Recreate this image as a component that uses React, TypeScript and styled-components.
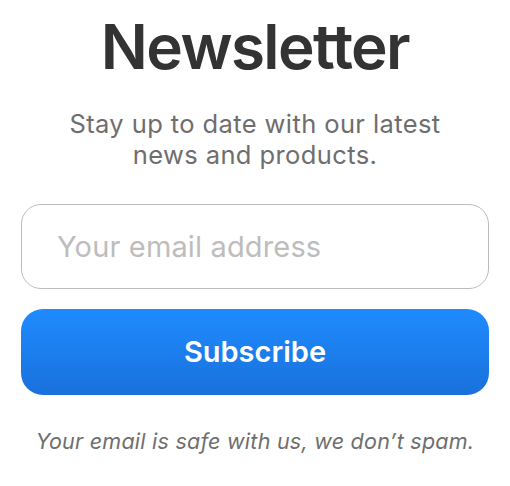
import React from 'react'
import styled, { createGlobalStyle } from 'styled-components'

const GlobalStyle = createGlobalStyle`
  html, body {
    margin: 0;
    padding: 0;
    background: #ffffff;
  }
  body {
    font-family: Inter, "Liberation Sans", Arial, sans-serif;
    -webkit-font-smoothing: antialiased;
  }
`

const Card = styled.div`
  width: 510px;
  box-sizing: border-box;
  padding: 12px 21px 0;
  display: flex;
  flex-direction: column;
  align-items: center;
`

const Title = styled.h1`
  margin: 0;
  font-size: 62px;
  line-height: 70px;
  font-weight: 600;
  letter-spacing: -1.6px;
  color: #333333;
`

const Lead = styled.p`
  margin: 26px 0 0;
  font-size: 25.5px;
  line-height: 31px;
  font-weight: 400;
  letter-spacing: 0.4px;
  color: #6e6e6e;
  text-align: center;
`

const Form = styled.form`
  width: 100%;
  margin-top: 34px;
  display: flex;
  flex-direction: column;
  gap: 20px;
`

const EmailInput = styled.input`
  width: 100%;
  height: 85px;
  box-sizing: border-box;
  padding: 0 35px;
  border: 1.5px solid #bcbcbc;
  border-radius: 20px;
  font-family: inherit;
  font-size: 29px;
  letter-spacing: 0.15px;
  color: #333333;
  outline: none;
  background: #ffffff;

  &::placeholder {
    color: #bdbdbd;
  }
`

const SubscribeButton = styled.button`
  width: 100%;
  height: 86px;
  border: none;
  border-radius: 22px;
  background: linear-gradient(180deg, #1f8bff 0%, #1971db 100%);
  color: #ffffff;
  font-family: inherit;
  font-size: 29px;
  font-weight: 600;
  padding-bottom: 2px;
  cursor: pointer;
`

const Note = styled.p`
  margin: 32px 0 0;
  font-size: 21.5px;
  line-height: 28px;
  font-style: italic;
  letter-spacing: 0.25px;
  color: #6e6e6e;
  text-align: center;
`

export default function App() {
  return (
    <>
      <GlobalStyle />
      <Card>
        <Title>Newsletter</Title>
        <Lead>
          Stay up to date with our latest
          <br />
          news and products.
        </Lead>
        <Form onSubmit={e => e.preventDefault()}>
          <EmailInput type="email" placeholder="Your email address" />
          <SubscribeButton type="submit">Subscribe</SubscribeButton>
        </Form>
        <Note>Your email is safe with us, we don’t spam.</Note>
      </Card>
    </>
  )
}
